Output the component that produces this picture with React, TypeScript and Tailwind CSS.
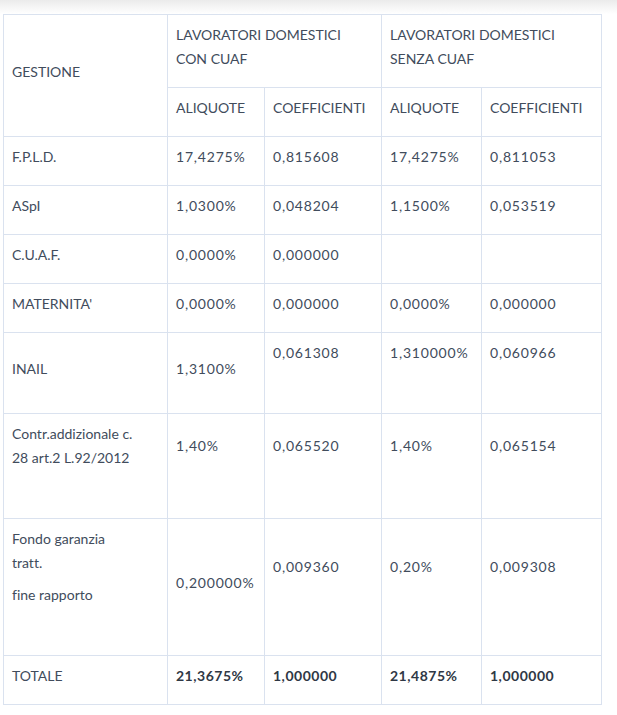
import React from 'react';

type Cell = {
  text?: string;
  extra?: boolean;
};

// label: each entry is a paragraph, each paragraph may hold several lines
const rows: { label: string[][]; cells: Cell[]; labelExtra?: boolean }[] = [
  {
    label: [['F.P.L.D.']],
    cells: [{ text: '17,4275%' }, { text: '0,815608' }, { text: '17,4275%' }, { text: '0,811053' }],
  },
  {
    label: [['ASpI']],
    cells: [{ text: '1,0300%' }, { text: '0,048204' }, { text: '1,1500%' }, { text: '0,053519' }],
  },
  {
    label: [['C.U.A.F.']],
    cells: [{ text: '0,0000%' }, { text: '0,000000' }, { text: '' }, { text: '' }],
  },
  {
    label: [["MATERNITA'"]],
    cells: [{ text: '0,0000%' }, { text: '0,000000' }, { text: '0,0000%' }, { text: '0,000000' }],
  },
  {
    label: [['INAIL']],
    cells: [
      { text: '1,3100%' },
      { text: '0,061308', extra: true },
      { text: '1,310000%', extra: true },
      { text: '0,060966', extra: true },
    ],
  },
  {
    label: [['Contr.addizionale c.', '28 art.2 L.92/2012']],
    labelExtra: true,
    cells: [
      { text: '1,40%', extra: true },
      { text: '0,065520', extra: true },
      { text: '1,40%', extra: true },
      { text: '0,065154', extra: true },
    ],
  },
  {
    label: [['Fondo garanzia', 'tratt.'], ['fine rapporto']],
    labelExtra: true,
    cells: [
      { text: '0,200000%' },
      { text: '0,009360', extra: true },
      { text: '0,20%', extra: true },
      { text: '0,009308', extra: true },
    ],
  },
];

const td = 'border border-[#dae2ef] px-2 pt-2 align-middle';

const App = () => {
  return (
    <div className="min-h-[715px] bg-white font-['Lato',sans-serif] text-[14px] leading-6 tabular-nums text-[#414c5c] [font-variant-ligatures:none]">
      <div className="h-[14px] bg-gradient-to-b from-[#ebebeb] to-white" />
      <table className="ml-[3px] w-[598px] table-fixed border-collapse">
        <colgroup>
          <col className="w-[164px]" />
          <col className="w-[97px]" />
          <col className="w-[117px]" />
          <col className="w-[100px]" />
          <col className="w-[120px]" />
        </colgroup>
        <thead>
          <tr>
            <th rowSpan={2} className={`${td} pb-2 text-left font-normal`}>
              <p className="mb-2">GESTIONE</p>
            </th>
            <th colSpan={2} className={`${td} pb-2 text-left font-normal`}>
              <p className="mb-2">
                LAVORATORI DOMESTICI
                <br />
                CON CUAF
              </p>
            </th>
            <th colSpan={2} className={`${td} pb-2 text-left font-normal`}>
              <p className="mb-2">
                LAVORATORI DOMESTICI
                <br />
                SENZA CUAF
              </p>
            </th>
          </tr>
          <tr>
            {['ALIQUOTE', 'COEFFICIENTI', 'ALIQUOTE', 'COEFFICIENTI'].map((h, i) => (
              <th key={i} className={`${td} pb-2 text-left font-normal`}>
                <p className="mb-2 whitespace-nowrap">{h}</p>
              </th>
            ))}
          </tr>
        </thead>
        <tbody>
          {rows.map((row, ri) => (
            <tr key={ri}>
              <td className={`${td} ${row.labelExtra ? 'pb-10' : 'pb-2'}`}>
                {row.label.map((para, pi) => (
                  <p key={pi} className="mb-2">
                    {para.map((line, li) => (
                      <React.Fragment key={li}>
                        {li > 0 && <br />}
                        {line}
                      </React.Fragment>
                    ))}
                  </p>
                ))}
              </td>
              {row.cells.map((c, ci) => (
                <td key={ci} className={`${td} ${c.extra ? 'pb-10' : 'pb-2'}`}>
                  <p className="mb-2 min-h-6 whitespace-nowrap tracking-[0.8px]">{c.text}</p>
                </td>
              ))}
            </tr>
          ))}
          <tr>
            <td className={`${td} pb-2`}>
              <p className="mb-2">TOTALE</p>
            </td>
            {['21,3675%', '1,000000', '21,4875%', '1,000000'].map((t, i) => (
              <td key={i} className={`${td} pb-2 font-bold text-[#2f3845]`}>
                <p className="mb-2 tracking-[0.5px]">{t}</p>
              </td>
            ))}
          </tr>
        </tbody>
      </table>
    </div>
  );
};

export default App;
